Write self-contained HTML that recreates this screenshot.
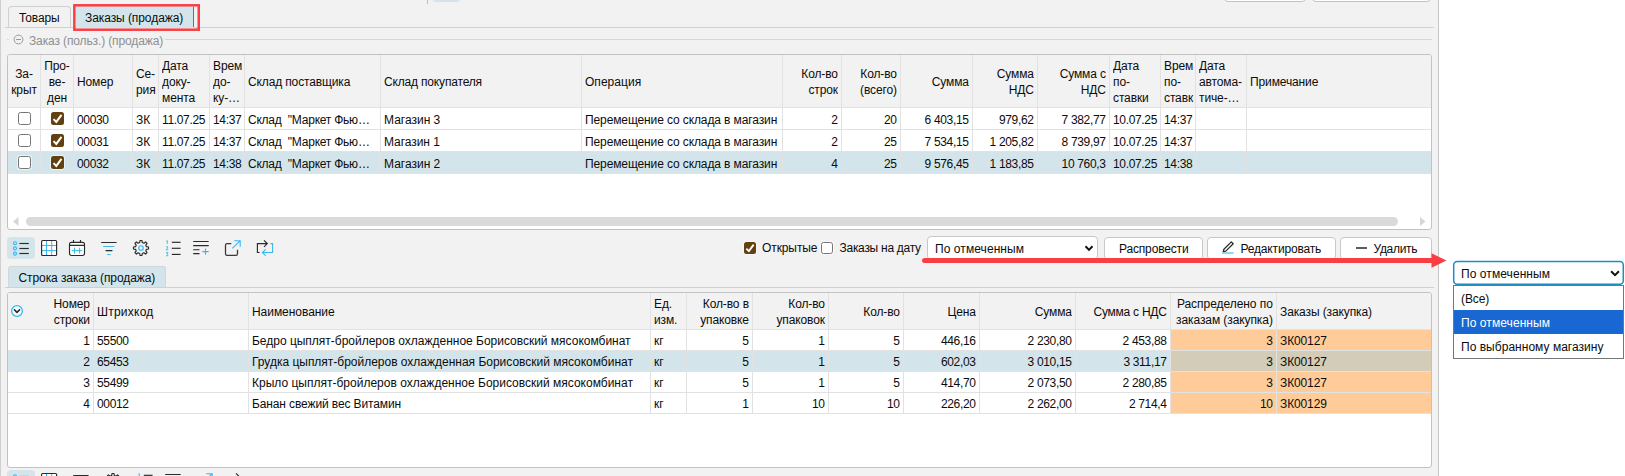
<!DOCTYPE html>
<html lang="ru"><head><meta charset="utf-8"><title>Заказы (продажа)</title>
<style>
html,body{margin:0;padding:0;}
body{width:1625px;height:476px;overflow:hidden;position:relative;background:#fff;font-family:"Liberation Sans",sans-serif;font-size:12px;letter-spacing:-0.12px;color:#0c0c0c;}
.b{position:absolute;}
.t{position:absolute;white-space:pre;}
</style></head><body>
<div class="b " style="left:0px;top:0px;width:1439px;height:476px;background:#f2f2f2;"></div>
<div class="b " style="left:0px;top:0px;width:1px;height:476px;background:#cfcfcf;"></div>
<div class="b " style="left:1438px;top:0px;width:1px;height:476px;background:#c6c6c6;"></div>
<div class="b " style="left:427px;top:0px;width:1px;height:4px;background:#bdbdbd;"></div>
<div class="b " style="left:433px;top:-10px;width:27px;height:12px;background:#d3e5ea;border-radius:3px;"></div>
<div class="b " style="left:1224px;top:-20px;width:82px;height:22px;background:#fff;border:1px solid #c2c2c2;border-radius:4px;box-sizing:border-box;"></div>
<div class="b " style="left:1312px;top:-20px;width:119px;height:22px;background:#fff;border:1px solid #c2c2c2;border-radius:4px;box-sizing:border-box;"></div>
<div class="b " style="left:5px;top:27px;width:1429px;height:1px;background:#d0d0d0;"></div>
<div class="b " style="left:8px;top:6px;width:63px;height:22px;border:1px solid #d0d0d0;border-bottom:none;border-radius:4px 4px 0 0;box-sizing:border-box;"></div>
<div class="t " style="top:9.84px;line-height:16px;left:19px;">Товары</div>
<div class="b " style="left:76px;top:6px;width:118px;height:22px;background:#d3e5ea;"></div>
<div class="b " style="left:193px;top:7px;width:1px;height:20px;background:#1b8cc4;"></div>
<div class="t " style="top:9.84px;line-height:16px;left:85px;"><span style="letter-spacing:-0.073px;">Заказы (продажа)</span></div>
<svg class="b" style="left:70px;top:2px" width="134" height="32" viewBox="70 2 134 32"><rect x="74.35" y="5.3" width="124.4" height="24.4" fill="none" stroke="#fa3e44" stroke-width="2.5"/></svg>
<div class="b " style="left:7px;top:39px;width:2px;height:1px;background:#dcdcdc;"></div>
<div class="b " style="left:165px;top:39px;width:1267px;height:1px;background:#d6d6d6;"></div>
<svg class="b" style="left:13px;top:34px" width="12" height="12" viewBox="0 0 12 12"><circle cx="5.5" cy="5.5" r="4.4" fill="none" stroke="#9a9a9a" stroke-width="1"/><path d="M3 5.5H8" stroke="#9a9a9a" stroke-width="1"/></svg>
<div class="t " style="top:33.04px;line-height:16px;left:29px;color:#8f8f8f;"><span style="letter-spacing:-0.126px;">Заказ (польз.) (продажа)</span></div>
<div class="b " style="left:7px;top:54px;width:1425px;height:176px;background:#fff;border:1px solid #c2c2c2;border-radius:3px;box-sizing:border-box;"></div>
<div class="b " style="left:8px;top:55px;width:1423px;height:52px;background:#f2f2f2;border-radius:2px 2px 0 0;"></div>
<div class="b " style="left:8px;top:152px;width:1423px;height:21px;background:#d3e5ea;"></div>
<div class="b " style="left:8px;top:107px;width:1423px;height:1px;background:#e2e2e2;"></div>
<div class="b " style="left:8px;top:129px;width:1423px;height:1px;background:#e2e2e2;"></div>
<div class="b " style="left:8px;top:151px;width:1423px;height:1px;background:#e2e2e2;"></div>
<div class="b " style="left:8px;top:173px;width:1423px;height:1px;background:#e2e2e2;"></div>
<div class="b " style="left:40px;top:55px;width:1px;height:119px;background:#e2e2e2;"></div>
<div class="b " style="left:73px;top:55px;width:1px;height:119px;background:#e2e2e2;"></div>
<div class="b " style="left:132px;top:55px;width:1px;height:119px;background:#e2e2e2;"></div>
<div class="b " style="left:158px;top:55px;width:1px;height:119px;background:#e2e2e2;"></div>
<div class="b " style="left:209px;top:55px;width:1px;height:119px;background:#e2e2e2;"></div>
<div class="b " style="left:244px;top:55px;width:1px;height:119px;background:#e2e2e2;"></div>
<div class="b " style="left:380px;top:55px;width:1px;height:119px;background:#e2e2e2;"></div>
<div class="b " style="left:581px;top:55px;width:1px;height:119px;background:#e2e2e2;"></div>
<div class="b " style="left:782px;top:55px;width:1px;height:119px;background:#e2e2e2;"></div>
<div class="b " style="left:841px;top:55px;width:1px;height:119px;background:#e2e2e2;"></div>
<div class="b " style="left:900px;top:55px;width:1px;height:119px;background:#e2e2e2;"></div>
<div class="b " style="left:972px;top:55px;width:1px;height:119px;background:#e2e2e2;"></div>
<div class="b " style="left:1037px;top:55px;width:1px;height:119px;background:#e2e2e2;"></div>
<div class="b " style="left:1109px;top:55px;width:1px;height:119px;background:#e2e2e2;"></div>
<div class="b " style="left:1160px;top:55px;width:1px;height:119px;background:#e2e2e2;"></div>
<div class="b " style="left:1195px;top:55px;width:1px;height:119px;background:#e2e2e2;"></div>
<div class="b " style="left:1246px;top:55px;width:1px;height:119px;background:#e2e2e2;"></div>
<div class="t " style="top:65.84px;line-height:16px;left:8.0px;width:32px;text-align:center;overflow:hidden;white-space:pre;">За-<br>крыт</div>
<div class="t " style="top:57.84px;line-height:16px;left:41.0px;width:32px;text-align:center;overflow:hidden;white-space:pre;">Про-<br>ве-<br>ден</div>
<div class="t " style="top:73.84px;line-height:16px;left:77px;width:55px;overflow:hidden;white-space:pre;">Номер</div>
<div class="t " style="top:65.84px;line-height:16px;left:136px;width:22px;overflow:hidden;white-space:pre;">Се-<br>рия</div>
<div class="t " style="top:57.84px;line-height:16px;left:162px;width:47px;overflow:hidden;white-space:pre;">Дата<br>доку-<br>мента</div>
<div class="t " style="top:57.84px;line-height:16px;left:213px;width:31px;overflow:hidden;white-space:pre;">Врем<br>до-<br>ку-…</div>
<div class="t " style="top:73.84px;line-height:16px;left:248px;width:132px;overflow:hidden;white-space:pre;"><span style="letter-spacing:-0.135px;">Склад поставщика</span></div>
<div class="t " style="top:73.84px;line-height:16px;left:384px;width:197px;overflow:hidden;white-space:pre;"><span style="letter-spacing:-0.171px;">Склад покупателя</span></div>
<div class="t " style="top:73.84px;line-height:16px;left:585px;width:197px;overflow:hidden;white-space:pre;"><span style="letter-spacing:0.037px;">Операция</span></div>
<div class="t " style="top:65.84px;line-height:16px;left:783.9px;width:54px;text-align:right;overflow:hidden;white-space:pre;">Кол-во<br>строк</div>
<div class="t " style="top:65.84px;line-height:16px;left:842.9px;width:54px;text-align:right;overflow:hidden;white-space:pre;">Кол-во<br>(всего)</div>
<div class="t " style="top:73.84px;line-height:16px;left:901.9px;width:67px;text-align:right;overflow:hidden;white-space:pre;">Сумма</div>
<div class="t " style="top:65.84px;line-height:16px;left:973.9000000000001px;width:60px;text-align:right;overflow:hidden;white-space:pre;">Сумма<br>НДС</div>
<div class="t " style="top:65.84px;line-height:16px;left:1038.9px;width:67px;text-align:right;overflow:hidden;white-space:pre;">Сумма с<br>НДС</div>
<div class="t " style="top:57.84px;line-height:16px;left:1113px;width:47px;overflow:hidden;white-space:pre;">Дата<br>по-<br>ставки</div>
<div class="t " style="top:57.84px;line-height:16px;left:1164px;width:31px;overflow:hidden;white-space:pre;">Врем<br>по-<br>ставк</div>
<div class="t " style="top:57.84px;line-height:16px;left:1199px;width:47px;overflow:hidden;white-space:pre;">Дата<br>автома-<br>тиче-…</div>
<div class="t " style="top:73.84px;line-height:16px;left:1250px;width:181px;overflow:hidden;white-space:pre;">Примечание</div>
<div class="b" style="left:18px;top:112px;width:13px;height:13px;background:#fff;border:1px solid #767676;border-radius:2.5px;box-sizing:border-box;box-shadow:0 0 0 1px rgba(255,255,255,.55);"></div>
<div class="b" style="left:51px;top:112px;width:13px;height:13px;background:#63400f;border-radius:2.5px;box-shadow:0 0 0 1px rgba(255,255,255,.55);"><svg width="13" height="13" viewBox="0 0 13 13" style="position:absolute;left:0;top:0"><path d="M2.5 7.1L5.3 9.9L10.5 2.8" fill="none" stroke="#fff" stroke-width="2"/></svg></div>
<div class="t " style="top:111.84px;line-height:16px;left:77px;width:55px;overflow:hidden;white-space:pre;"><span style="letter-spacing:-0.340px;">00030</span></div>
<div class="t " style="top:111.84px;line-height:16px;left:136px;width:22px;overflow:hidden;white-space:pre;">ЗК</div>
<div class="t " style="top:111.84px;line-height:16px;left:162px;width:47px;overflow:hidden;white-space:pre;"><span style="letter-spacing:-0.340px;">11.07.25</span></div>
<div class="t " style="top:111.84px;line-height:16px;left:213px;width:31px;overflow:hidden;white-space:pre;"><span style="letter-spacing:-0.340px;">14:37</span></div>
<div class="t " style="top:111.84px;line-height:16px;left:248px;width:132px;overflow:hidden;white-space:pre;"><span style="letter-spacing:-0.228px;">Склад  "Маркет Фью…</span></div>
<div class="t " style="top:111.84px;line-height:16px;left:384px;width:197px;overflow:hidden;white-space:pre;"><span style="letter-spacing:0.000px;">Магазин 3</span></div>
<div class="t " style="top:111.84px;line-height:16px;left:585px;width:197px;overflow:hidden;white-space:pre;"><span style="letter-spacing:-0.112px;">Перемещение со склада в магазин</span></div>
<div class="t " style="top:111.84px;line-height:16px;left:783.9px;width:54px;text-align:right;overflow:hidden;white-space:pre;"><span style="letter-spacing:-0.340px;margin-right:0.340px;">2</span></div>
<div class="t " style="top:111.84px;line-height:16px;left:842.9px;width:54px;text-align:right;overflow:hidden;white-space:pre;"><span style="letter-spacing:-0.340px;margin-right:0.340px;">20</span></div>
<div class="t " style="top:111.84px;line-height:16px;left:901.9px;width:67px;text-align:right;overflow:hidden;white-space:pre;"><span style="letter-spacing:-0.340px;margin-right:0.340px;">6 403,15</span></div>
<div class="t " style="top:111.84px;line-height:16px;left:973.9000000000001px;width:60px;text-align:right;overflow:hidden;white-space:pre;"><span style="letter-spacing:-0.340px;margin-right:0.340px;">979,62</span></div>
<div class="t " style="top:111.84px;line-height:16px;left:1038.9px;width:67px;text-align:right;overflow:hidden;white-space:pre;"><span style="letter-spacing:-0.340px;margin-right:0.340px;">7 382,77</span></div>
<div class="t " style="top:111.84px;line-height:16px;left:1113px;width:47px;overflow:hidden;white-space:pre;"><span style="letter-spacing:-0.340px;">10.07.25</span></div>
<div class="t " style="top:111.84px;line-height:16px;left:1164px;width:31px;overflow:hidden;white-space:pre;"><span style="letter-spacing:-0.340px;">14:37</span></div>
<div class="b" style="left:18px;top:134px;width:13px;height:13px;background:#fff;border:1px solid #767676;border-radius:2.5px;box-sizing:border-box;box-shadow:0 0 0 1px rgba(255,255,255,.55);"></div>
<div class="b" style="left:51px;top:134px;width:13px;height:13px;background:#63400f;border-radius:2.5px;box-shadow:0 0 0 1px rgba(255,255,255,.55);"><svg width="13" height="13" viewBox="0 0 13 13" style="position:absolute;left:0;top:0"><path d="M2.5 7.1L5.3 9.9L10.5 2.8" fill="none" stroke="#fff" stroke-width="2"/></svg></div>
<div class="t " style="top:133.84px;line-height:16px;left:77px;width:55px;overflow:hidden;white-space:pre;"><span style="letter-spacing:-0.340px;">00031</span></div>
<div class="t " style="top:133.84px;line-height:16px;left:136px;width:22px;overflow:hidden;white-space:pre;">ЗК</div>
<div class="t " style="top:133.84px;line-height:16px;left:162px;width:47px;overflow:hidden;white-space:pre;"><span style="letter-spacing:-0.340px;">11.07.25</span></div>
<div class="t " style="top:133.84px;line-height:16px;left:213px;width:31px;overflow:hidden;white-space:pre;"><span style="letter-spacing:-0.340px;">14:37</span></div>
<div class="t " style="top:133.84px;line-height:16px;left:248px;width:132px;overflow:hidden;white-space:pre;"><span style="letter-spacing:-0.228px;">Склад  "Маркет Фью…</span></div>
<div class="t " style="top:133.84px;line-height:16px;left:384px;width:197px;overflow:hidden;white-space:pre;"><span style="letter-spacing:-0.062px;">Магазин 1</span></div>
<div class="t " style="top:133.84px;line-height:16px;left:585px;width:197px;overflow:hidden;white-space:pre;"><span style="letter-spacing:-0.112px;">Перемещение со склада в магазин</span></div>
<div class="t " style="top:133.84px;line-height:16px;left:783.9px;width:54px;text-align:right;overflow:hidden;white-space:pre;"><span style="letter-spacing:-0.340px;margin-right:0.340px;">2</span></div>
<div class="t " style="top:133.84px;line-height:16px;left:842.9px;width:54px;text-align:right;overflow:hidden;white-space:pre;"><span style="letter-spacing:-0.340px;margin-right:0.340px;">25</span></div>
<div class="t " style="top:133.84px;line-height:16px;left:901.9px;width:67px;text-align:right;overflow:hidden;white-space:pre;"><span style="letter-spacing:-0.340px;margin-right:0.340px;">7 534,15</span></div>
<div class="t " style="top:133.84px;line-height:16px;left:973.9000000000001px;width:60px;text-align:right;overflow:hidden;white-space:pre;"><span style="letter-spacing:-0.340px;margin-right:0.340px;">1 205,82</span></div>
<div class="t " style="top:133.84px;line-height:16px;left:1038.9px;width:67px;text-align:right;overflow:hidden;white-space:pre;"><span style="letter-spacing:-0.340px;margin-right:0.340px;">8 739,97</span></div>
<div class="t " style="top:133.84px;line-height:16px;left:1113px;width:47px;overflow:hidden;white-space:pre;"><span style="letter-spacing:-0.340px;">10.07.25</span></div>
<div class="t " style="top:133.84px;line-height:16px;left:1164px;width:31px;overflow:hidden;white-space:pre;"><span style="letter-spacing:-0.340px;">14:37</span></div>
<div class="b" style="left:18px;top:156px;width:13px;height:13px;background:#fff;border:1px solid #767676;border-radius:2.5px;box-sizing:border-box;box-shadow:0 0 0 1px rgba(255,255,255,.55);"></div>
<div class="b" style="left:51px;top:156px;width:13px;height:13px;background:#63400f;border-radius:2.5px;box-shadow:0 0 0 1px rgba(255,255,255,.55);"><svg width="13" height="13" viewBox="0 0 13 13" style="position:absolute;left:0;top:0"><path d="M2.5 7.1L5.3 9.9L10.5 2.8" fill="none" stroke="#fff" stroke-width="2"/></svg></div>
<div class="t " style="top:155.84px;line-height:16px;left:77px;width:55px;overflow:hidden;white-space:pre;"><span style="letter-spacing:-0.340px;">00032</span></div>
<div class="t " style="top:155.84px;line-height:16px;left:136px;width:22px;overflow:hidden;white-space:pre;">ЗК</div>
<div class="t " style="top:155.84px;line-height:16px;left:162px;width:47px;overflow:hidden;white-space:pre;"><span style="letter-spacing:-0.340px;">11.07.25</span></div>
<div class="t " style="top:155.84px;line-height:16px;left:213px;width:31px;overflow:hidden;white-space:pre;"><span style="letter-spacing:-0.340px;">14:38</span></div>
<div class="t " style="top:155.84px;line-height:16px;left:248px;width:132px;overflow:hidden;white-space:pre;"><span style="letter-spacing:-0.228px;">Склад  "Маркет Фью…</span></div>
<div class="t " style="top:155.84px;line-height:16px;left:384px;width:197px;overflow:hidden;white-space:pre;"><span style="letter-spacing:0.000px;">Магазин 2</span></div>
<div class="t " style="top:155.84px;line-height:16px;left:585px;width:197px;overflow:hidden;white-space:pre;"><span style="letter-spacing:-0.112px;">Перемещение со склада в магазин</span></div>
<div class="t " style="top:155.84px;line-height:16px;left:783.9px;width:54px;text-align:right;overflow:hidden;white-space:pre;"><span style="letter-spacing:-0.340px;margin-right:0.340px;">4</span></div>
<div class="t " style="top:155.84px;line-height:16px;left:842.9px;width:54px;text-align:right;overflow:hidden;white-space:pre;"><span style="letter-spacing:-0.340px;margin-right:0.340px;">25</span></div>
<div class="t " style="top:155.84px;line-height:16px;left:901.9px;width:67px;text-align:right;overflow:hidden;white-space:pre;"><span style="letter-spacing:-0.340px;margin-right:0.340px;">9 576,45</span></div>
<div class="t " style="top:155.84px;line-height:16px;left:973.9000000000001px;width:60px;text-align:right;overflow:hidden;white-space:pre;"><span style="letter-spacing:-0.340px;margin-right:0.340px;">1 183,85</span></div>
<div class="t " style="top:155.84px;line-height:16px;left:1038.9px;width:67px;text-align:right;overflow:hidden;white-space:pre;"><span style="letter-spacing:-0.340px;margin-right:0.340px;">10 760,3</span></div>
<div class="t " style="top:155.84px;line-height:16px;left:1113px;width:47px;overflow:hidden;white-space:pre;"><span style="letter-spacing:-0.340px;">10.07.25</span></div>
<div class="t " style="top:155.84px;line-height:16px;left:1164px;width:31px;overflow:hidden;white-space:pre;"><span style="letter-spacing:-0.340px;">14:38</span></div>
<div class="b " style="left:26px;top:217px;width:1372px;height:9px;background:#dadada;border-radius:4.5px;"></div>
<svg class="b" style="left:13px;top:217px" width="6" height="9" viewBox="0 0 6 9"><path d="M5.5 0L0 4.5L5.5 9Z" fill="#d6d6d6"/></svg>
<svg class="b" style="left:1420px;top:217px" width="6" height="9" viewBox="0 0 6 9"><path d="M0 0L5.5 4.5L0 9Z" fill="#d6d6d6"/></svg>
<div class="b " style="left:7px;top:237px;width:28px;height:22px;background:#d3e5ea;border-radius:4px;"></div>
<svg class="b" style="left:10px;top:238px" width="24" height="20" viewBox="10 238 24 20" fill="none"><circle cx="15" cy="243.2" r="1.5" stroke="#3ab7ee" stroke-width="1.1"/><circle cx="15" cy="248.4" r="1.5" stroke="#3ab7ee" stroke-width="1.1"/><circle cx="15" cy="253.6" r="1.5" stroke="#3ab7ee" stroke-width="1.1"/><path d="M19.4 243.5H28.8" stroke="#2a2a2a" stroke-width="1.15"/><path d="M19.4 248.5H28.8" stroke="#2a2a2a" stroke-width="1.15"/><path d="M19.4 253.5H28.8" stroke="#2a2a2a" stroke-width="1.15"/></svg>
<svg class="b" style="left:38px;top:238px" width="22" height="20" viewBox="38 238 22 20" fill="none"><rect x="41.6" y="240.5" width="15" height="15" rx="1" fill="#fff"/><path d="M46.5 241V255M51.7 241V255M42 245.5H56M42 250.6H56" stroke="#3ab7ee" stroke-width="1"/><rect x="41.6" y="240.5" width="15" height="15" rx="1" stroke="#2a2a2a" stroke-width="1.15"/></svg>
<svg class="b" style="left:66px;top:238px" width="22" height="20" viewBox="66 238 22 20" fill="none"><rect x="69.5" y="242.3" width="15" height="13.2" rx="2" fill="#fff" stroke="#2a2a2a" stroke-width="1.15"/><path d="M73.5 240V242.3M80.5 240V242.3M69.5 245.3H84.5" stroke="#2a2a2a" stroke-width="1.15"/><path d="M71.8 250.6H82.2M74.5 247.7V253.6M79.6 247.7V253.6" stroke="#3ab7ee" stroke-width="1"/></svg>
<svg class="b" style="left:98px;top:238px" width="22" height="20" viewBox="98 238 22 20" fill="none"><path d="M101.2 242.5H116.6M105.6 250.6H112.4" stroke="#2a2a2a" stroke-width="1.15"/><path d="M103.2 246.5H114.4M107.2 254.6H110.8" stroke="#3ab7ee" stroke-width="1"/></svg>
<svg class="b" style="left:131px;top:238px" width="22" height="20" viewBox="131 238 22 20" fill="none"><path d="M139.69 242.55L139.99 240.47L142.01 240.47L142.31 242.55L143.93 243.23L145.61 241.96L147.04 243.39L145.77 245.07L146.45 246.69L148.53 246.99L148.53 249.01L146.45 249.31L145.77 250.93L147.04 252.61L145.61 254.04L143.93 252.77L142.31 253.45L142.01 255.53L139.99 255.53L139.69 253.45L138.07 252.77L136.39 254.04L134.96 252.61L136.23 250.93L135.55 249.31L133.47 249.01L133.47 246.99L135.55 246.69L136.23 245.07L134.96 243.39L136.39 241.96L138.07 243.23Z" stroke="#2a2a2a" stroke-width="1.15" stroke-linejoin="round"/><circle cx="141" cy="248" r="2.3" stroke="#3ab7ee" stroke-width="1.1"/></svg>
<svg class="b" style="left:163px;top:238px" width="22" height="20" viewBox="163 238 22 20" fill="none"><path d="M171.8 242.3H180.6" stroke="#2a2a2a" stroke-width="1.15"/><path d="M171.8 248.3H180.6" stroke="#2a2a2a" stroke-width="1.15"/><path d="M171.8 254.4H180.6" stroke="#2a2a2a" stroke-width="1.15"/><path d="M166.3 241.2L167.3 240.6V244" stroke="#3ab7ee" stroke-width="0.9"/><path d="M166 246.9Q167.2 246 167.8 247Q168 247.9 166 249.8H168.2" stroke="#3ab7ee" stroke-width="0.9"/><path d="M166 252.6H167.9L166.9 254Q168.3 254.2 168 255.3Q167.4 256.2 166 255.7" stroke="#3ab7ee" stroke-width="0.9"/></svg>
<svg class="b" style="left:190px;top:238px" width="22" height="20" viewBox="190 238 22 20" fill="none"><path d="M193.2 241.5H208.7M193.2 245.6H208.7M193.2 249.7H199.5M193.2 253.6H199.5" stroke="#2a2a2a" stroke-width="1.15"/><path d="M202.3 251.6H208.7M205.5 248.4V254.8" stroke="#3ab7ee" stroke-width="1.1"/></svg>
<svg class="b" style="left:222px;top:238px" width="22" height="20" viewBox="222 238 22 20" fill="none"><path d="M231.3 243.7H227Q225.5 243.7 225.5 245.2V253.8Q225.5 255.3 227 255.3H236Q237.5 255.3 237.5 253.8V249.7" stroke="#3a3a3a" stroke-width="1.3"/><path d="M232.3 248.3L240 240.8M234.3 240.8H240.2V246.8" stroke="#3ab7ee" stroke-width="1.1"/></svg>
<svg class="b" style="left:254px;top:238px" width="22" height="20" viewBox="254 238 22 20" fill="none"><path d="M259.6 252.5H257.4V243.6H267.2M264 240.4L267.3 243.6L264 246.8" stroke="#2a2a2a" stroke-width="1.15"/><path d="M270.4 243.6H272.6V252.5H262.6M265.6 249.3L262.4 252.5L265.6 255.7" stroke="#3ab7ee" stroke-width="1.1"/></svg>
<div class="b" style="left:744px;top:242px;width:12px;height:12px;background:#63400f;border-radius:2.5px;box-shadow:0 0 0 1px rgba(255,255,255,.55);"><svg width="12" height="12" viewBox="0 0 13 13" style="position:absolute;left:0;top:0"><path d="M2.5 7.1L5.3 9.9L10.5 2.8" fill="none" stroke="#fff" stroke-width="2"/></svg></div>
<div class="t " style="top:239.84px;line-height:16px;left:762px;"><span style="letter-spacing:-0.098px;">Открытые</span></div>
<div class="b" style="left:821px;top:242px;width:12px;height:12px;background:#fff;border:1px solid #767676;border-radius:2.5px;box-sizing:border-box;box-shadow:0 0 0 1px rgba(255,255,255,.55);"></div>
<div class="t " style="top:239.84px;line-height:16px;left:839.5px;"><span style="letter-spacing:-0.271px;">Заказы на дату</span></div>
<div class="b " style="left:927px;top:236px;width:171px;height:24px;background:#fff;border:1px solid #c8c8c8;border-radius:4px;box-sizing:border-box;"></div>
<div class="t " style="top:241.24px;line-height:16px;left:935px;"><span style="letter-spacing:0.073px;">По отмеченным</span></div>
<svg class="b" style="left:1083px;top:244px" width="12" height="9" viewBox="0 0 12 9"><path d="M2.5 2.3L6 5.9L9.5 2.3" fill="none" stroke="#111" stroke-width="2"/></svg>
<div class="b " style="left:1104px;top:237px;width:99px;height:23px;background:#fff;border:1px solid #c8c8c8;border-radius:4px;box-sizing:border-box;"></div>
<div class="t " style="top:241.04px;line-height:16px;left:1119px;"><span style="letter-spacing:-0.165px;">Распровести</span></div>
<div class="b " style="left:1207px;top:237px;width:129px;height:23px;background:#fff;border:1px solid #c8c8c8;border-radius:4px;box-sizing:border-box;"></div>
<svg class="b" style="left:1220px;top:240px" width="16" height="15" viewBox="1220 240 16 15" fill="none"><path d="M1223.2 251.6L1223.9 249.2L1231.3 241.9L1233.2 243.8L1225.8 251.1Z" stroke="#2a2a2a" stroke-width="1.25" stroke-linejoin="round"/><path d="M1222.2 253H1233.6" stroke="#3ab7ee" stroke-width="1.1"/></svg>
<div class="t " style="top:241.04px;line-height:16px;left:1240.5px;"><span style="letter-spacing:-0.176px;">Редактировать</span></div>
<div class="b " style="left:1340px;top:237px;width:92px;height:23px;background:#fff;border:1px solid #c8c8c8;border-radius:4px;box-sizing:border-box;"></div>
<div class="b " style="left:1356px;top:247px;width:10.5px;height:2px;background:#5a5a5a;"></div>
<div class="t " style="top:241.04px;line-height:16px;left:1373.5px;"><span style="letter-spacing:-0.305px;">Удалить</span></div>
<div class="b " style="left:5px;top:287px;width:1429px;height:1px;background:#d0d0d0;"></div>
<div class="b " style="left:8px;top:266px;width:158px;height:21px;background:#d3e5ea;border:1px solid #cfd9dc;border-bottom:none;border-radius:3px 3px 0 0;box-sizing:border-box;"></div>
<div class="t " style="top:270.24px;line-height:16px;left:18.5px;"><span style="letter-spacing:-0.088px;">Строка заказа (продажа)</span></div>
<div class="b " style="left:7px;top:292px;width:1425px;height:176px;background:#fff;border:1px solid #c2c2c2;border-radius:3px;box-sizing:border-box;"></div>
<div class="b " style="left:8px;top:293px;width:1423px;height:36px;background:#f2f2f2;border-radius:2px 2px 0 0;"></div>
<div class="b " style="left:8px;top:351px;width:1423px;height:20px;background:#d3e5ea;"></div>
<div class="b " style="left:1171px;top:330px;width:260px;height:20px;background:#ffcc99;"></div>
<div class="b " style="left:1171px;top:351px;width:260px;height:20px;background:#d3ccb8;"></div>
<div class="b " style="left:1171px;top:372px;width:260px;height:20px;background:#ffcc99;"></div>
<div class="b " style="left:1171px;top:393px;width:260px;height:20px;background:#ffcc99;"></div>
<div class="b " style="left:8px;top:329px;width:1423px;height:1px;background:#e2e2e2;"></div>
<div class="b " style="left:8px;top:350px;width:1423px;height:1px;background:#e2e2e2;"></div>
<div class="b " style="left:8px;top:371px;width:1423px;height:1px;background:#e2e2e2;"></div>
<div class="b " style="left:8px;top:392px;width:1423px;height:1px;background:#e2e2e2;"></div>
<div class="b " style="left:8px;top:413px;width:1423px;height:1px;background:#e2e2e2;"></div>
<div class="b " style="left:93px;top:293px;width:1px;height:121px;background:#e2e2e2;"></div>
<div class="b " style="left:248px;top:293px;width:1px;height:121px;background:#e2e2e2;"></div>
<div class="b " style="left:650px;top:293px;width:1px;height:121px;background:#e2e2e2;"></div>
<div class="b " style="left:686px;top:293px;width:1px;height:121px;background:#e2e2e2;"></div>
<div class="b " style="left:752px;top:293px;width:1px;height:121px;background:#e2e2e2;"></div>
<div class="b " style="left:828px;top:293px;width:1px;height:121px;background:#e2e2e2;"></div>
<div class="b " style="left:903px;top:293px;width:1px;height:121px;background:#e2e2e2;"></div>
<div class="b " style="left:979px;top:293px;width:1px;height:121px;background:#e2e2e2;"></div>
<div class="b " style="left:1075px;top:293px;width:1px;height:121px;background:#e2e2e2;"></div>
<div class="b " style="left:1170px;top:293px;width:1px;height:121px;background:#e2e2e2;"></div>
<div class="b " style="left:1276px;top:293px;width:1px;height:121px;background:#e2e2e2;"></div>
<div class="t " style="top:295.84px;line-height:16px;left:8.900000000000006px;width:81px;text-align:right;overflow:hidden;white-space:pre;">Номер<br>строки</div>
<div class="t " style="top:303.84px;line-height:16px;left:97px;width:151px;overflow:hidden;white-space:pre;"><span style="letter-spacing:0.233px;">Штрихкод</span></div>
<div class="t " style="top:303.84px;line-height:16px;left:252px;width:398px;overflow:hidden;white-space:pre;"><span style="letter-spacing:-0.044px;">Наименование</span></div>
<div class="t " style="top:295.84px;line-height:16px;left:654px;width:32px;overflow:hidden;white-space:pre;">Ед.<br>изм.</div>
<div class="t " style="top:295.84px;line-height:16px;left:687.9px;width:61px;text-align:right;overflow:hidden;white-space:pre;">Кол-во в<br>упаковке</div>
<div class="t " style="top:295.84px;line-height:16px;left:753.9px;width:71px;text-align:right;overflow:hidden;white-space:pre;">Кол-во<br>упаковок</div>
<div class="t " style="top:303.84px;line-height:16px;left:829.9px;width:70px;text-align:right;overflow:hidden;white-space:pre;">Кол-во</div>
<div class="t " style="top:303.84px;line-height:16px;left:904.9px;width:71px;text-align:right;overflow:hidden;white-space:pre;">Цена</div>
<div class="t " style="top:303.84px;line-height:16px;left:980.9000000000001px;width:91px;text-align:right;overflow:hidden;white-space:pre;">Сумма</div>
<div class="t " style="top:303.84px;line-height:16px;left:1076.9px;width:90px;text-align:right;overflow:hidden;white-space:pre;"><span style="letter-spacing:-0.254px;margin-right:0.254px;">Сумма с НДС</span></div>
<div class="t " style="top:295.84px;line-height:16px;left:1171.9px;width:101px;text-align:right;overflow:hidden;white-space:pre;"><span style="letter-spacing:-0.045px;margin-right:0.045px;">Распределено по</span><br><span style="letter-spacing:-0.083px;margin-right:0.083px;">заказам (закупка)</span></div>
<div class="t " style="top:303.84px;line-height:16px;left:1280px;width:151px;overflow:hidden;white-space:pre;"><span style="letter-spacing:-0.106px;">Заказы (закупка)</span></div>
<svg class="b" style="left:10px;top:304px" width="14" height="14" viewBox="0 0 14 14"><circle cx="7" cy="7" r="5.4" fill="#fafdff" stroke="#3ab7ee" stroke-width="1.3"/><path d="M4 5.4L7 8.4L10 5.4" fill="none" stroke="#2a2a2a" stroke-width="1.5"/></svg>
<div class="t " style="top:332.84px;line-height:16px;left:8.900000000000006px;width:81px;text-align:right;overflow:hidden;white-space:pre;"><span style="letter-spacing:-0.340px;margin-right:0.340px;">1</span></div>
<div class="t " style="top:332.84px;line-height:16px;left:97px;width:151px;overflow:hidden;white-space:pre;"><span style="letter-spacing:-0.340px;">55500</span></div>
<div class="t " style="top:332.84px;line-height:16px;left:252px;width:398px;overflow:hidden;white-space:pre;"><span style="letter-spacing:-0.012px;">Бедро цыплят-бройлеров охлажденное Борисовский мясокомбинат</span></div>
<div class="t " style="top:332.84px;line-height:16px;left:654px;width:32px;overflow:hidden;white-space:pre;">кг</div>
<div class="t " style="top:332.84px;line-height:16px;left:687.9px;width:61px;text-align:right;overflow:hidden;white-space:pre;"><span style="letter-spacing:-0.340px;margin-right:0.340px;">5</span></div>
<div class="t " style="top:332.84px;line-height:16px;left:753.9px;width:71px;text-align:right;overflow:hidden;white-space:pre;"><span style="letter-spacing:-0.340px;margin-right:0.340px;">1</span></div>
<div class="t " style="top:332.84px;line-height:16px;left:829.9px;width:70px;text-align:right;overflow:hidden;white-space:pre;"><span style="letter-spacing:-0.340px;margin-right:0.340px;">5</span></div>
<div class="t " style="top:332.84px;line-height:16px;left:904.9px;width:71px;text-align:right;overflow:hidden;white-space:pre;"><span style="letter-spacing:-0.340px;margin-right:0.340px;">446,16</span></div>
<div class="t " style="top:332.84px;line-height:16px;left:980.9000000000001px;width:91px;text-align:right;overflow:hidden;white-space:pre;"><span style="letter-spacing:-0.340px;margin-right:0.340px;">2 230,80</span></div>
<div class="t " style="top:332.84px;line-height:16px;left:1076.9px;width:90px;text-align:right;overflow:hidden;white-space:pre;"><span style="letter-spacing:-0.340px;margin-right:0.340px;">2 453,88</span></div>
<div class="t " style="top:332.84px;line-height:16px;left:1171.9px;width:101px;text-align:right;overflow:hidden;white-space:pre;"><span style="letter-spacing:-0.340px;margin-right:0.340px;">3</span></div>
<div class="t " style="top:332.84px;line-height:16px;left:1280px;width:151px;overflow:hidden;white-space:pre;">ЗК00127</div>
<div class="t " style="top:353.84px;line-height:16px;left:8.900000000000006px;width:81px;text-align:right;overflow:hidden;white-space:pre;"><span style="letter-spacing:-0.340px;margin-right:0.340px;">2</span></div>
<div class="t " style="top:353.84px;line-height:16px;left:97px;width:151px;overflow:hidden;white-space:pre;"><span style="letter-spacing:-0.340px;">65453</span></div>
<div class="t " style="top:353.84px;line-height:16px;left:252px;width:398px;overflow:hidden;white-space:pre;"><span style="letter-spacing:-0.012px;">Грудка цыплят-бройлеров охлажденная Борисовский мясокомбинат</span></div>
<div class="t " style="top:353.84px;line-height:16px;left:654px;width:32px;overflow:hidden;white-space:pre;">кг</div>
<div class="t " style="top:353.84px;line-height:16px;left:687.9px;width:61px;text-align:right;overflow:hidden;white-space:pre;"><span style="letter-spacing:-0.340px;margin-right:0.340px;">5</span></div>
<div class="t " style="top:353.84px;line-height:16px;left:753.9px;width:71px;text-align:right;overflow:hidden;white-space:pre;"><span style="letter-spacing:-0.340px;margin-right:0.340px;">1</span></div>
<div class="t " style="top:353.84px;line-height:16px;left:829.9px;width:70px;text-align:right;overflow:hidden;white-space:pre;"><span style="letter-spacing:-0.340px;margin-right:0.340px;">5</span></div>
<div class="t " style="top:353.84px;line-height:16px;left:904.9px;width:71px;text-align:right;overflow:hidden;white-space:pre;"><span style="letter-spacing:-0.340px;margin-right:0.340px;">602,03</span></div>
<div class="t " style="top:353.84px;line-height:16px;left:980.9000000000001px;width:91px;text-align:right;overflow:hidden;white-space:pre;"><span style="letter-spacing:-0.340px;margin-right:0.340px;">3 010,15</span></div>
<div class="t " style="top:353.84px;line-height:16px;left:1076.9px;width:90px;text-align:right;overflow:hidden;white-space:pre;"><span style="letter-spacing:-0.340px;margin-right:0.340px;">3 311,17</span></div>
<div class="t " style="top:353.84px;line-height:16px;left:1171.9px;width:101px;text-align:right;overflow:hidden;white-space:pre;"><span style="letter-spacing:-0.340px;margin-right:0.340px;">3</span></div>
<div class="t " style="top:353.84px;line-height:16px;left:1280px;width:151px;overflow:hidden;white-space:pre;">ЗК00127</div>
<div class="t " style="top:374.84px;line-height:16px;left:8.900000000000006px;width:81px;text-align:right;overflow:hidden;white-space:pre;"><span style="letter-spacing:-0.340px;margin-right:0.340px;">3</span></div>
<div class="t " style="top:374.84px;line-height:16px;left:97px;width:151px;overflow:hidden;white-space:pre;"><span style="letter-spacing:-0.340px;">55499</span></div>
<div class="t " style="top:374.84px;line-height:16px;left:252px;width:398px;overflow:hidden;white-space:pre;"><span style="letter-spacing:0.003px;">Крыло цыплят-бройлеров охлажденное Борисовский мясокомбинат</span></div>
<div class="t " style="top:374.84px;line-height:16px;left:654px;width:32px;overflow:hidden;white-space:pre;">кг</div>
<div class="t " style="top:374.84px;line-height:16px;left:687.9px;width:61px;text-align:right;overflow:hidden;white-space:pre;"><span style="letter-spacing:-0.340px;margin-right:0.340px;">5</span></div>
<div class="t " style="top:374.84px;line-height:16px;left:753.9px;width:71px;text-align:right;overflow:hidden;white-space:pre;"><span style="letter-spacing:-0.340px;margin-right:0.340px;">1</span></div>
<div class="t " style="top:374.84px;line-height:16px;left:829.9px;width:70px;text-align:right;overflow:hidden;white-space:pre;"><span style="letter-spacing:-0.340px;margin-right:0.340px;">5</span></div>
<div class="t " style="top:374.84px;line-height:16px;left:904.9px;width:71px;text-align:right;overflow:hidden;white-space:pre;"><span style="letter-spacing:-0.340px;margin-right:0.340px;">414,70</span></div>
<div class="t " style="top:374.84px;line-height:16px;left:980.9000000000001px;width:91px;text-align:right;overflow:hidden;white-space:pre;"><span style="letter-spacing:-0.340px;margin-right:0.340px;">2 073,50</span></div>
<div class="t " style="top:374.84px;line-height:16px;left:1076.9px;width:90px;text-align:right;overflow:hidden;white-space:pre;"><span style="letter-spacing:-0.340px;margin-right:0.340px;">2 280,85</span></div>
<div class="t " style="top:374.84px;line-height:16px;left:1171.9px;width:101px;text-align:right;overflow:hidden;white-space:pre;"><span style="letter-spacing:-0.340px;margin-right:0.340px;">3</span></div>
<div class="t " style="top:374.84px;line-height:16px;left:1280px;width:151px;overflow:hidden;white-space:pre;">ЗК00127</div>
<div class="t " style="top:395.84px;line-height:16px;left:8.900000000000006px;width:81px;text-align:right;overflow:hidden;white-space:pre;"><span style="letter-spacing:-0.340px;margin-right:0.340px;">4</span></div>
<div class="t " style="top:395.84px;line-height:16px;left:97px;width:151px;overflow:hidden;white-space:pre;"><span style="letter-spacing:-0.340px;">00012</span></div>
<div class="t " style="top:395.84px;line-height:16px;left:252px;width:398px;overflow:hidden;white-space:pre;"><span style="letter-spacing:-0.123px;">Банан свежий вес Витамин</span></div>
<div class="t " style="top:395.84px;line-height:16px;left:654px;width:32px;overflow:hidden;white-space:pre;">кг</div>
<div class="t " style="top:395.84px;line-height:16px;left:687.9px;width:61px;text-align:right;overflow:hidden;white-space:pre;"><span style="letter-spacing:-0.340px;margin-right:0.340px;">1</span></div>
<div class="t " style="top:395.84px;line-height:16px;left:753.9px;width:71px;text-align:right;overflow:hidden;white-space:pre;"><span style="letter-spacing:-0.340px;margin-right:0.340px;">10</span></div>
<div class="t " style="top:395.84px;line-height:16px;left:829.9px;width:70px;text-align:right;overflow:hidden;white-space:pre;"><span style="letter-spacing:-0.340px;margin-right:0.340px;">10</span></div>
<div class="t " style="top:395.84px;line-height:16px;left:904.9px;width:71px;text-align:right;overflow:hidden;white-space:pre;"><span style="letter-spacing:-0.340px;margin-right:0.340px;">226,20</span></div>
<div class="t " style="top:395.84px;line-height:16px;left:980.9000000000001px;width:91px;text-align:right;overflow:hidden;white-space:pre;"><span style="letter-spacing:-0.340px;margin-right:0.340px;">2 262,00</span></div>
<div class="t " style="top:395.84px;line-height:16px;left:1076.9px;width:90px;text-align:right;overflow:hidden;white-space:pre;"><span style="letter-spacing:-0.340px;margin-right:0.340px;">2 714,4</span></div>
<div class="t " style="top:395.84px;line-height:16px;left:1171.9px;width:101px;text-align:right;overflow:hidden;white-space:pre;"><span style="letter-spacing:-0.340px;margin-right:0.340px;">10</span></div>
<div class="t " style="top:395.84px;line-height:16px;left:1280px;width:151px;overflow:hidden;white-space:pre;">ЗК00129</div>
<div class="b " style="left:7px;top:470px;width:28px;height:22px;background:#d3e5ea;border-radius:4px;"></div>
<svg class="b" style="left:10px;top:471px" width="24" height="20" viewBox="10 238 24 20" fill="none"><circle cx="15" cy="243.2" r="1.5" stroke="#3ab7ee" stroke-width="1.1"/><circle cx="15" cy="248.4" r="1.5" stroke="#3ab7ee" stroke-width="1.1"/><circle cx="15" cy="253.6" r="1.5" stroke="#3ab7ee" stroke-width="1.1"/><path d="M19.4 243.5H28.8" stroke="#2a2a2a" stroke-width="1.15"/><path d="M19.4 248.5H28.8" stroke="#2a2a2a" stroke-width="1.15"/><path d="M19.4 253.5H28.8" stroke="#2a2a2a" stroke-width="1.15"/></svg>
<svg class="b" style="left:38px;top:471px" width="22" height="20" viewBox="38 238 22 20" fill="none"><rect x="41.6" y="240.5" width="15" height="15" rx="1" fill="#fff"/><path d="M46.5 241V255M51.7 241V255M42 245.5H56M42 250.6H56" stroke="#3ab7ee" stroke-width="1"/><rect x="41.6" y="240.5" width="15" height="15" rx="1" stroke="#2a2a2a" stroke-width="1.15"/></svg>
<svg class="b" style="left:70px;top:471px" width="22" height="20" viewBox="98 238 22 20" fill="none"><path d="M101.2 242.5H116.6M105.6 250.6H112.4" stroke="#2a2a2a" stroke-width="1.15"/><path d="M103.2 246.5H114.4M107.2 254.6H110.8" stroke="#3ab7ee" stroke-width="1"/></svg>
<svg class="b" style="left:103px;top:471px" width="22" height="20" viewBox="131 238 22 20" fill="none"><path d="M139.69 242.55L139.99 240.47L142.01 240.47L142.31 242.55L143.93 243.23L145.61 241.96L147.04 243.39L145.77 245.07L146.45 246.69L148.53 246.99L148.53 249.01L146.45 249.31L145.77 250.93L147.04 252.61L145.61 254.04L143.93 252.77L142.31 253.45L142.01 255.53L139.99 255.53L139.69 253.45L138.07 252.77L136.39 254.04L134.96 252.61L136.23 250.93L135.55 249.31L133.47 249.01L133.47 246.99L135.55 246.69L136.23 245.07L134.96 243.39L136.39 241.96L138.07 243.23Z" stroke="#2a2a2a" stroke-width="1.15" stroke-linejoin="round"/><circle cx="141" cy="248" r="2.3" stroke="#3ab7ee" stroke-width="1.1"/></svg>
<svg class="b" style="left:135px;top:471px" width="22" height="20" viewBox="163 238 22 20" fill="none"><path d="M171.8 242.3H180.6" stroke="#2a2a2a" stroke-width="1.15"/><path d="M171.8 248.3H180.6" stroke="#2a2a2a" stroke-width="1.15"/><path d="M171.8 254.4H180.6" stroke="#2a2a2a" stroke-width="1.15"/><path d="M166.3 241.2L167.3 240.6V244" stroke="#3ab7ee" stroke-width="0.9"/><path d="M166 246.9Q167.2 246 167.8 247Q168 247.9 166 249.8H168.2" stroke="#3ab7ee" stroke-width="0.9"/><path d="M166 252.6H167.9L166.9 254Q168.3 254.2 168 255.3Q167.4 256.2 166 255.7" stroke="#3ab7ee" stroke-width="0.9"/></svg>
<svg class="b" style="left:162px;top:471px" width="22" height="20" viewBox="190 238 22 20" fill="none"><path d="M193.2 241.5H208.7M193.2 245.6H208.7M193.2 249.7H199.5M193.2 253.6H199.5" stroke="#2a2a2a" stroke-width="1.15"/><path d="M202.3 251.6H208.7M205.5 248.4V254.8" stroke="#3ab7ee" stroke-width="1.1"/></svg>
<svg class="b" style="left:194px;top:471px" width="22" height="20" viewBox="222 238 22 20" fill="none"><path d="M231.3 243.7H227Q225.5 243.7 225.5 245.2V253.8Q225.5 255.3 227 255.3H236Q237.5 255.3 237.5 253.8V249.7" stroke="#3a3a3a" stroke-width="1.3"/><path d="M232.3 248.3L240 240.8M234.3 240.8H240.2V246.8" stroke="#3ab7ee" stroke-width="1.1"/></svg>
<svg class="b" style="left:226px;top:471px" width="22" height="20" viewBox="254 238 22 20" fill="none"><path d="M259.6 252.5H257.4V243.6H267.2M264 240.4L267.3 243.6L264 246.8" stroke="#2a2a2a" stroke-width="1.15"/><path d="M270.4 243.6H272.6V252.5H262.6M265.6 249.3L262.4 252.5L265.6 255.7" stroke="#3ab7ee" stroke-width="1.1"/></svg>
<svg class="b" style="left:1450px;top:258px" width="175" height="30" viewBox="1450 258 175 30"><rect x="1453.7" y="261.6" width="169.6" height="22.6" rx="3.5" fill="#fff" stroke="#1b8cc4" stroke-width="1.5"/></svg>
<div class="t " style="top:266.04px;line-height:16px;left:1461px;"><span style="letter-spacing:0.073px;">По отмеченным</span></div>
<svg class="b" style="left:1609px;top:269px" width="12" height="9" viewBox="0 0 12 9"><path d="M2.1 2.3L6 6.2L9.9 2.3" fill="none" stroke="#111" stroke-width="2"/></svg>
<div class="b " style="left:1453px;top:285px;width:171px;height:74px;background:#fff;border:1px solid #767676;box-sizing:border-box;"></div>
<div class="b " style="left:1454px;top:310px;width:169px;height:24px;background:#1967d2;"></div>
<div class="t " style="top:291.34px;line-height:16px;left:1461px;">(Все)</div>
<div class="t " style="top:315.34px;line-height:16px;left:1461px;color:#fff;"><span style="letter-spacing:0.073px;">По отмеченным</span></div>
<div class="t " style="top:339.34px;line-height:16px;left:1461px;"><span style="letter-spacing:0.028px;">По выбранному магазину</span></div>
<svg class="b" style="left:915px;top:250px" width="540" height="22" viewBox="915 250 540 22"><path d="M924.5 260.5H1433" stroke="#fa3e44" stroke-width="5" stroke-linecap="round" fill="none"/><path d="M1431.5 253.3L1446.5 260.5L1431.5 267.7Z" fill="#fa3e44"/></svg>
</body></html>
